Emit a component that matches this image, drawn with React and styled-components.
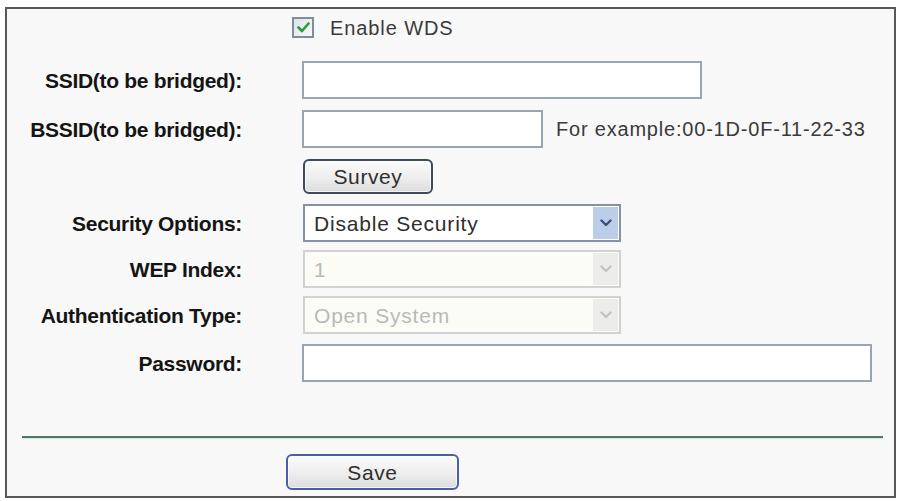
import React from "react";
import styled, { createGlobalStyle } from "styled-components";

const Global = createGlobalStyle`
  html, body { margin: 0; padding: 0; background: #ffffff; }
  body { font-family: "Liberation Sans", Arial, sans-serif; }
`;

const Panel = styled.div`
  box-sizing: border-box;
  margin: 7px 0 0 5px;
  width: 891px;
  height: 491px;
  border: 2px solid #585858;
  background: #f8f8f8;
  padding-top: 8px;
  display: flex;
  flex-direction: column;
`;

const Row = styled.div`
  display: grid;
  grid-template-columns: 235px 1fr;
  column-gap: 60px;
  align-items: center;
  margin-top: ${(p) => p.$gap || 0}px;
`;

const Label = styled.div`
  grid-column: 1;
  text-align: right;
  font-weight: bold;
  font-size: 21px;
  line-height: 1;
  color: #141414;
  letter-spacing: -0.3px;
`;

const Cell = styled.div`
  grid-column: 2;
  display: flex;
  align-items: center;
  margin-left: ${(p) => p.$shift || 0}px;
`;

const CheckLabel = styled.label`
  display: flex;
  align-items: center;
  gap: 16px;
  font-size: 20px;
  line-height: 1;
  color: #3a3a3a;
  letter-spacing: 0.9px;
`;

const CheckBox = styled.span`
  box-sizing: border-box;
  width: 22px;
  height: 21px;
  border: 2px solid #7e8c9c;
  background: linear-gradient(135deg, #dfe4ea, #f6f7f9);
  display: flex;
  align-items: center;
  justify-content: center;
`;

const TextInput = styled.div`
  box-sizing: border-box;
  width: ${(p) => p.$w}px;
  height: 38px;
  border: 2px solid #9aa5b2;
  background: #ffffff;
`;

const Hint = styled.span`
  margin-left: 13px;
  font-size: 20px;
  line-height: 1;
  color: #3a3a3a;
  letter-spacing: 0.8px;
  white-space: nowrap;
`;

const Button = styled.div`
  box-sizing: border-box;
  width: ${(p) => p.$w}px;
  height: ${(p) => p.$h}px;
  border: 2px solid ${(p) => p.$edge};
  border-radius: 6px;
  background: linear-gradient(#fbfbfb, #ececec 60%, #dcdcdc);
  display: flex;
  align-items: center;
  justify-content: center;
  font-size: 21px;
  line-height: 1;
  color: #2e2e2e;
  letter-spacing: 0.6px;
  box-shadow: inset 0 0 0 1px rgba(255, 255, 255, 0.7);
`;

const Select = styled.div`
  box-sizing: border-box;
  width: 318px;
  height: 38px;
  border: 2px solid ${(p) => (p.$disabled ? "#d2d2d0" : "#8592a6")};
  background: ${(p) => (p.$disabled ? "#fcfcf7" : "#ffffff")};
  display: flex;
  align-items: stretch;
  padding: 1px;
`;

const SelectValue = styled.span`
  flex: 1;
  display: flex;
  align-items: center;
  padding-left: 8px;
  font-size: 21px;
  line-height: 1;
  letter-spacing: 0.8px;
  color: ${(p) => (p.$disabled ? "#b9b9b6" : "#2e2e2e")};
`;

const ArrowBox = styled.span`
  width: 25px;
  display: flex;
  align-items: center;
  justify-content: center;
  background: ${(p) => (p.$disabled ? "#ececea" : "#bccde8")};
`;

const Divider = styled.div`
  margin: 54px 11px 0 15px;
  height: 2px;
  background: #4a7a64;
  box-shadow: 0 1px 1px #cfe8da;
`;

const Footer = styled.div`
  margin-top: 16px;
  padding-left: 279px;
  display: flex;
`;

const Chevron = ({ color }) => (
  <svg width="12" height="8" viewBox="0 0 12 8">
    <path d="M1.5 1.5 L6 6 L10.5 1.5" fill="none" stroke={color} strokeWidth="2.4" strokeLinecap="round" strokeLinejoin="round" />
  </svg>
);

const Check = () => (
  <svg width="13" height="11" viewBox="0 0 13 11">
    <path d="M1.5 5.5 L5 9 L11.5 1.5" fill="none" stroke="#2f9a3a" strokeWidth="2.6" strokeLinecap="round" strokeLinejoin="round" />
  </svg>
);

const Dropdown = ({ value, disabled }) => (
  <Select $disabled={disabled}>
    <SelectValue $disabled={disabled}>{value}</SelectValue>
    <ArrowBox $disabled={disabled}>
      <Chevron color={disabled ? "#c4c4c2" : "#3b4f7c"} />
    </ArrowBox>
  </Select>
);

export default function App() {
  return (
    <>
      <Global />
      <Panel>
        <Row>
          <Cell $shift={-10}>
            <CheckLabel>
              <CheckBox>
                <Check />
              </CheckBox>
              Enable WDS
            </CheckLabel>
          </Cell>
        </Row>
        <Row $gap={23}>
          <Label>SSID(to be bridged):</Label>
          <Cell>
            <TextInput $w={400} />
          </Cell>
        </Row>
        <Row $gap={11}>
          <Label>BSSID(to be bridged):</Label>
          <Cell>
            <TextInput $w={241} />
            <Hint>For example:00-1D-0F-11-22-33</Hint>
          </Cell>
        </Row>
        <Row $gap={11}>
          <Cell $shift={1}>
            <Button $w={130} $h={35} $edge="#3e4a58">Survey</Button>
          </Cell>
        </Row>
        <Row $gap={10}>
          <Label>Security Options:</Label>
          <Cell $shift={1}>
            <Dropdown value="Disable Security" />
          </Cell>
        </Row>
        <Row $gap={8}>
          <Label>WEP Index:</Label>
          <Cell $shift={1}>
            <Dropdown value="1" disabled />
          </Cell>
        </Row>
        <Row $gap={8}>
          <Label>Authentication Type:</Label>
          <Cell $shift={1}>
            <Dropdown value="Open System" disabled />
          </Cell>
        </Row>
        <Row $gap={10}>
          <Label>Password:</Label>
          <Cell>
            <TextInput $w={570} />
          </Cell>
        </Row>
        <Divider />
        <Footer>
          <Button $w={173} $h={36} $edge="#4b5fa6">Save</Button>
        </Footer>
      </Panel>
    </>
  );
}
